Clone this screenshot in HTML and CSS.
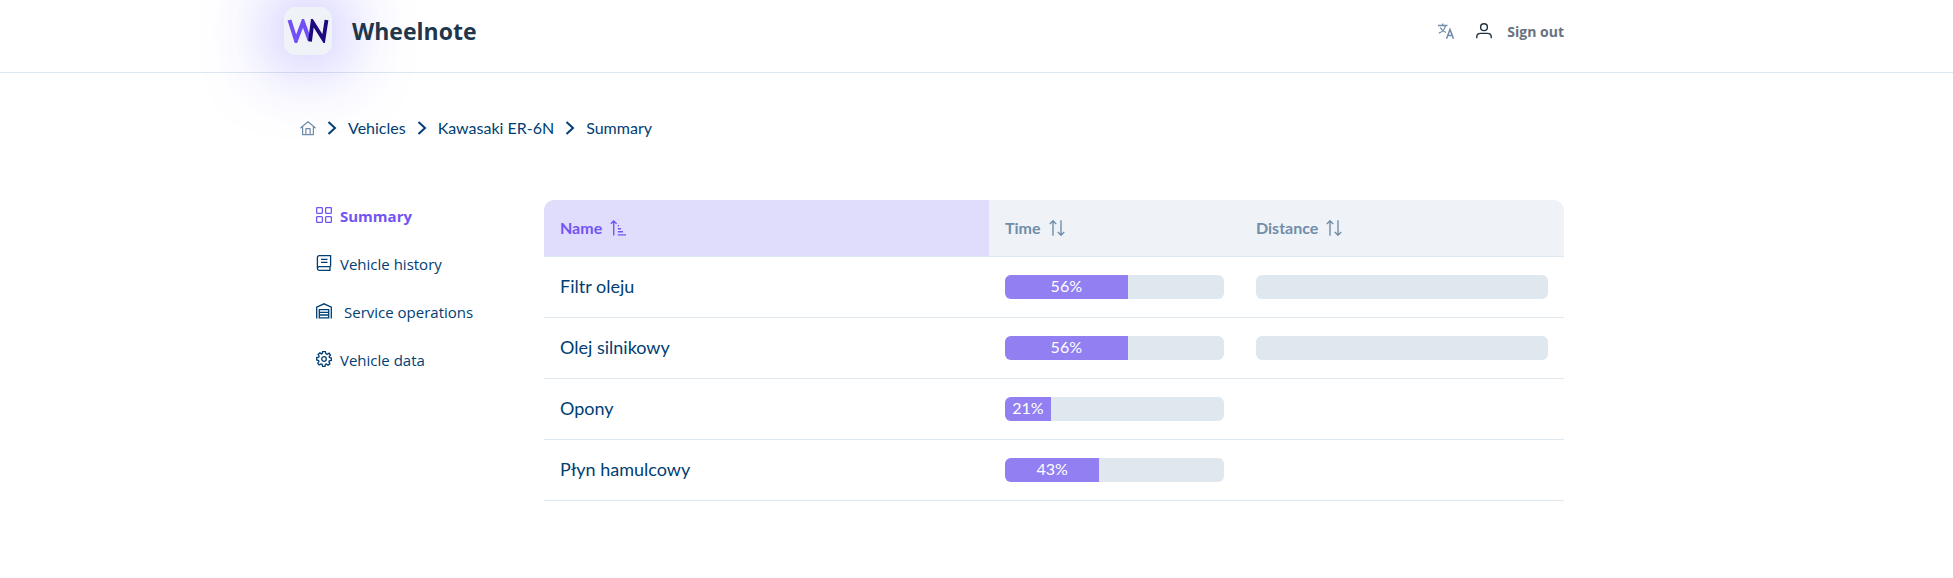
FILE: index.html
```html
<!DOCTYPE html>
<html lang="en">
<head>
  <meta charset="UTF-8" />
  <meta name="viewport" content="width=device-width, initial-scale=1.0" />
  <title>Wheelnote</title>
  <link rel="stylesheet" href="styles.css">
</head>
<body>
<header class="header">
  <div class="container header-inner">
    <a href="#" class="brand">
      <span class="logo">
        <svg width="42" height="24" viewBox="0 0 42 24" fill="none">
          <path d="M2.500 1L9 21.500L16 3L22.500 21" stroke="#7350f5" stroke-width="4"/>
          <path d="M23 22.500L25.500 3L36.500 20.500L39.500 1" stroke="#1d0a7c" stroke-width="3.800"/>
        </svg>
      </span>
      <span class="brand-name">Wheelnote</span>
    </a>
    <div class="actions">
      <button class="icon-btn" aria-label="Language">
        <svg width="16" height="16" viewBox="0 0 16 16" fill="none" stroke="currentColor" stroke-width="1.300">
          <path d="M0 2.500H9.500M4.700 .5V2.500M7.500 2.500C7 6 4 9 .8 10.200M2.200 4.500C3.500 7 5.500 8.700 8 9.500"/>
          <path d="M8.500 15.800L12 6.500L15.500 15.800M9.700 12.600H14.300" stroke-width="1.500"/>
        </svg>
      </button>
      <button class="icon-btn icon-user" aria-label="Profile">
        <svg width="16" height="16" viewBox="0 0 16 16" fill="none" stroke="currentColor" stroke-width="1.400" stroke-linecap="round">
          <circle cx="8" cy="4.200" r="3.400"/>
          <path d="M.8 14.800V13.800C.8 11.800 2.500 10.400 4.500 10.400H11.500C13.500 10.400 15.200 11.800 15.200 13.800V14.800"/>
        </svg>
      </button>
      <button class="sign-out">Sign out</button>
    </div>
  </div>
</header>

<div class="container">
  <nav class="breadcrumb" aria-label="Breadcrumb">
    <a href="#" class="home" aria-label="Home">
      <svg width="16" height="16" viewBox="0 0 16 16" fill="none" stroke="currentColor" stroke-width="1.200" stroke-linejoin="round" stroke-linecap="round">
        <path d="M.8 7.800L8 1.800L15.200 7.800M2.600 6.600V14.600H13.400V6.600M5.900 14.400V8.600H10.100V14.400"/>
      </svg>
    </a>
    <svg class="chevron" width="10" height="16" viewBox="0 0 10 16"><path d="M1.500 2L8 8L1.500 14"/></svg>
    <a href="#">Vehicles</a>
    <svg class="chevron" width="10" height="16" viewBox="0 0 10 16"><path d="M1.500 2L8 8L1.500 14"/></svg>
    <a href="#">Kawasaki ER-6N</a>
    <svg class="chevron" width="10" height="16" viewBox="0 0 10 16"><path d="M1.500 2L8 8L1.500 14"/></svg>
    <a href="#">Summary</a>
  </nav>

  <div class="layout">
    <nav class="side-menu">
      <a href="#" class="menu-item active">
        <svg width="16" height="16" viewBox="0 0 16 16">
          <rect x=".6" y=".6" width="5.800" height="5.800" rx="1"/>
          <rect x="9.600" y=".6" width="5.800" height="5.800" rx="1"/>
          <rect x=".6" y="9.600" width="5.800" height="5.800" rx="1"/>
          <rect x="9.600" y="9.600" width="5.800" height="5.800" rx="1"/>
        </svg>
        <span>Summary</span>
      </a>
      <a href="#" class="menu-item">
        <svg width="16" height="16" viewBox="0 0 16 16">
          <path d="M14.600 11.500V.7H3.200C2.200 .7 1.400 1.500 1.400 2.500V13.500C1.400 14.500 2.200 15.300 3.200 15.300H14.600M14 15V11.700M14.600 11.700H3.200C2.200 11.700 1.400 12.500 1.400 13.500M5 4.300H11.500M5 7.300H11.500"/>
        </svg>
        <span>Vehicle history</span>
      </a>
      <a href="#" class="menu-item menu-item-wide">
        <svg width="16" height="16" viewBox="0 0 16 16">
          <path d="M.7 15.600V4.200L8 .8L15.300 4.200V15.600M3.300 15.600V6.700H12.700V15.600M3.300 9.300H12.700M3.300 12H12.700M3.300 14.800H12.700"/>
        </svg>
        <span>Service operations</span>
      </a>
      <a href="#" class="menu-item">
        <svg width="16" height="16" viewBox="0 0 16 16">
          <path d="M6.600 .7H9.400L9.900 2.700L11.300 3.300L13.100 2.200L14.500 4L13.200 5.500L13.400 6.500L15.300 7V9.400L13.300 9.900L12.900 10.900L13.900 12.700L12 14.100L10.400 13L9.500 13.300L9 15.300H6.600L6.100 13.300L5 12.900L3.200 13.900L1.800 12.200L2.900 10.500L2.600 9.500L.7 9V6.600L2.700 6.100L3.100 5L2.100 3.300L3.900 1.900L5.500 2.900L6.200 2.600Z"/>
          <circle cx="8" cy="8" r="2.300"/>
        </svg>
        <span>Vehicle data</span>
      </a>
    </nav>

    <main class="content">
      <table class="table">
        <thead>
          <tr>
            <th class="col-name sorted" aria-sort="ascending">
              <button class="sort">Name
                <svg width="16" height="16" viewBox="0 0 16 16"><path d="M3.700 15.500V1M.8 3.700L3.700 .9L6.600 3.700M7.800 5.700H9M7.800 8.700H11M7.800 11.700H13M7.800 14.900H16"/></svg>
              </button>
            </th>
            <th class="col-time">
              <button class="sort">Time
                <svg width="16" height="16" viewBox="0 0 16 16"><path d="M4 15.700V1M.8 3.900L4 .8L7.200 3.900M12 .3V15M8.800 12.100L12 15.200L15.200 12.100"/></svg>
              </button>
            </th>
            <th class="col-distance">
              <button class="sort">Distance
                <svg width="16" height="16" viewBox="0 0 16 16"><path d="M4 15.700V1M.8 3.900L4 .8L7.200 3.900M12 .3V15M8.800 12.100L12 15.200L15.200 12.100"/></svg>
              </button>
            </th>
          </tr>
        </thead>
        <tbody>
          <tr>
            <td class="name">Filtr oleju</td>
            <td><div class="progress"><div class="progress-value" style="width: 56%">56%</div></div></td>
            <td><div class="progress"></div></td>
          </tr>
          <tr>
            <td class="name">Olej silnikowy</td>
            <td><div class="progress"><div class="progress-value" style="width: 56%">56%</div></div></td>
            <td><div class="progress"></div></td>
          </tr>
          <tr>
            <td class="name">Opony</td>
            <td><div class="progress"><div class="progress-value" style="width: 21%">21%</div></div></td>
            <td></td>
          </tr>
          <tr>
            <td class="name">Płyn hamulcowy</td>
            <td><div class="progress"><div class="progress-value" style="width: 43%">43%</div></div></td>
            <td></td>
          </tr>
        </tbody>
      </table>
    </main>
  </div>
</div>
</body>
</html>
```
FILE: styles.css
```css
* {
  box-sizing: border-box;
}
body {
  font-family: Lato, sans-serif;
  font-size: 16px;
  color: #003e73;
  background: #fff;
  margin: 0;
}
a {
  color: inherit;
  text-decoration: none;
}
button {
  background: none;
  border: 0;
  padding: 0;
  font: inherit;
  color: inherit;
  cursor: pointer;
}
svg {
  display: block;
  flex: none;
}
.container {
  max-width: 1385px;
  margin: 0 auto;
  padding-right: 105px;
}

/* header */
.header {
  border-bottom: 1px solid #dfe7ef;
  font-family: "Open Sans", sans-serif;
}
.header-inner {
  display: flex;
  justify-content: space-between;
  align-items: center;
  height: 72px;
  padding-bottom: 10px;
}
.brand {
  display: flex;
  align-items: center;
  gap: 20px;
}
.logo {
  display: flex;
  align-items: center;
  justify-content: center;
  width: 48px;
  height: 48px;
  border-radius: 12px;
  background: #eff3f8;
  box-shadow: 0 0 76px rgba(99, 90, 255, 0.9);
}
.brand-name {
  font-size: 23px;
  font-weight: 700;
  color: #20364b;
}
.actions {
  display: flex;
  align-items: center;
}
.icon-btn {
  color: #708da9;
  margin-right: 22px;
}
.icon-user {
  color: #20303f;
  margin-right: 15px;
}
.sign-out {
  font-size: 14px;
  font-weight: 700;
  color: #677280;
}

/* breadcrumb */
.breadcrumb {
  display: flex;
  align-items: center;
  gap: 11px;
  padding: 45px 16px 0;
  line-height: 20px;
}
.home {
  color: #708da9;
}
.chevron {
  fill: none;
  stroke: currentColor;
  stroke-width: 2;
}

/* side menu */
.layout {
  display: flex;
  align-items: flex-start;
  margin-top: 62px;
}
.side-menu {
  flex: none;
  width: 260px;
  padding-left: 32px;
  padding-top: 4px;
  font-family: "Open Sans", sans-serif;
  font-size: 15px;
  line-height: 24px;
}
.menu-item {
  display: flex;
  align-items: center;
  gap: 8px;
  margin-bottom: 24px;
}
.menu-item svg {
  fill: none;
  stroke: currentColor;
  stroke-width: 1.3;
  margin-bottom: 3px;
}
.menu-item-wide {
  gap: 12px;
}
.active {
  color: #7254f3;
  font-weight: 700;
}

/* table */
.content {
  flex: 1;
}
.table {
  width: 100%;
  table-layout: fixed;
  border-collapse: separate;
  border-spacing: 0;
}
.table th {
  height: 57px;
  padding: 0 16px 2px;
  text-align: left;
  background: #eff3f8;
  color: #708da9;
  border-bottom: 1px solid #dfe7ef;
}
.table th:first-child {
  border-top-left-radius: 10px;
}
.table th:last-child {
  border-top-right-radius: 10px;
}
.table th.sorted {
  background: #e0dcfc;
  color: #7254f3;
}
.col-name {
  width: 445px;
}
.col-time {
  width: 251px;
}
.sort {
  display: flex;
  align-items: center;
  gap: 8px;
  font-weight: 700;
}
.sort svg {
  fill: none;
  stroke: currentColor;
  stroke-width: 1.4;
  margin-top: 2px;
}
.table td {
  height: 61px;
  padding: 0 16px;
  font-size: 18px;
  border-bottom: 1px solid #dfe7ef;
}
.table .name {
  padding-bottom: 2px;
}
.progress {
  height: 24px;
  border-radius: 6px;
  background: #dfe7ef;
  overflow: hidden;
}
.progress-value {
  height: 24px;
  line-height: 22px;
  font-size: 16px;
  text-align: center;
  color: #fff;
  background: #9280f2;
}
```
